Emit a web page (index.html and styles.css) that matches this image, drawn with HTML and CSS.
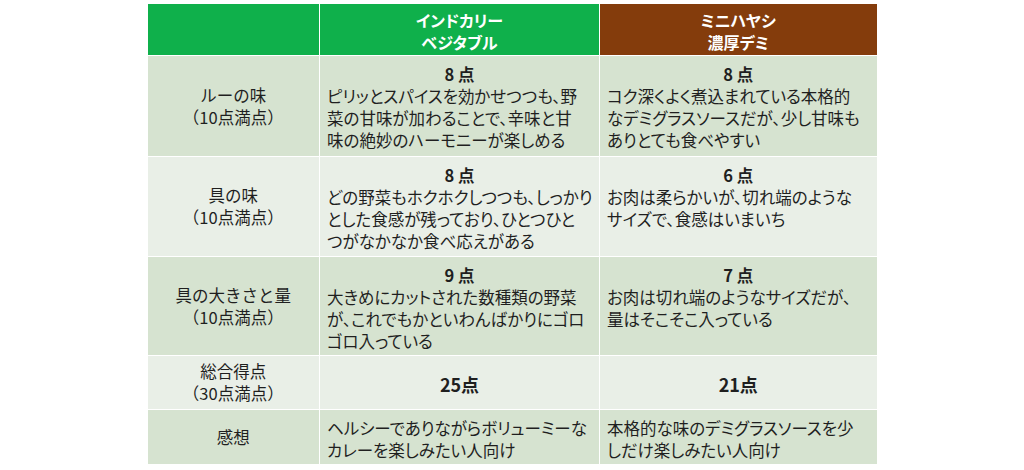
FILE: index.html
```html
<!DOCTYPE html>
<html lang="ja">
<head>
<meta charset="utf-8">
<link rel="stylesheet" href="styles.css">
</head>
<body>
<table class="cmp">
  <colgroup>
    <col class="c1"><col class="c2"><col class="c3">
  </colgroup>
  <thead>
    <tr class="head">
      <th class="h-green"></th>
      <th class="h-green">インドカリー<br>ベジタブル</th>
      <th class="h-brown">ミニハヤシ<br>濃厚デミ</th>
    </tr>
  </thead>
  <tbody>
    <tr class="dark r1">
      <td class="label">ルーの味<br>（10点満点）</td>
      <td class="desc"><div class="score">8 点</div>ピリッとスパイスを効かせつつも、野<br>菜の甘味が加わることで、辛味と甘<br>味の絶妙のハーモニーが楽しめる</td>
      <td class="desc"><div class="score">8 点</div>コク深くよく煮込まれている本格的<br>なデミグラスソースだが、少し甘味も<br>ありとても食べやすい</td>
    </tr>
    <tr class="light r2">
      <td class="label">具の味<br>（10点満点）</td>
      <td class="desc"><div class="score">8 点</div>どの野菜もホクホクしつつも、しっかり<br>とした食感が残っており、ひとつひと<br>つがなかなか食べ応えがある</td>
      <td class="desc"><div class="score">6 点</div>お肉は柔らかいが、切れ端のような<br>サイズで、食感はいまいち</td>
    </tr>
    <tr class="dark r3">
      <td class="label">具の大きさと量<br>（10点満点）</td>
      <td class="desc"><div class="score">9 点</div>大きめにカットされた数種類の野菜<br>が、これでもかといわんばかりにゴロ<br>ゴロ入っている</td>
      <td class="desc"><div class="score">7 点</div>お肉は切れ端のようなサイズだが、<br>量はそこそこ入っている</td>
    </tr>
    <tr class="light r4">
      <td class="label">総合得点<br>（30点満点）</td>
      <td class="total">25点</td>
      <td class="total">21点</td>
    </tr>
    <tr class="dark r5">
      <td class="label">感想</td>
      <td class="desc">ヘルシーでありながらボリューミーな<br>カレーを楽しみたい人向け</td>
      <td class="desc">本格的な味のデミグラスソースを少<br>しだけ楽しみたい人向け</td>
    </tr>
  </tbody>
</table>
</body>
</html>
```
FILE: styles.css
```css
html, body {
  margin: 0;
  padding: 0;
  background: #ffffff;
}
body {
  padding-top: 4px;
  font-family: "Noto Sans CJK JP", "Noto Sans", sans-serif;
  font-feature-settings: "palt";
  color: #1f1f1f;
}
.cmp {
  width: 729px;
  margin: 0 auto;
  border-collapse: collapse;
  table-layout: fixed;
  font-size: 16.5px;
  line-height: 22px;
}
.c1 { width: 172px; }
.c2 { width: 280px; }
.c3 { width: 277px; }
.cmp th, .cmp td {
  border: 1px solid #ffffff;
  padding: 0;
  white-space: nowrap;
  overflow: hidden;
}
.cmp tr > :first-child { border-left: none; }
.cmp tr > :last-child { border-right: none; }
.cmp thead th { border-top: none; }
.cmp tbody tr:last-child td { border-bottom: none; }
.head { height: 51px; }
.head th {
  color: #ffffff;
  font-size: 16px;
  font-weight: 700;
  text-align: center;
  vertical-align: middle;
  line-height: 22px;
  padding-top: 3px;
}
.h-green { background: #0fb04b; }
.h-brown { background: #843c0c; }
.h-green + .h-green { border-left: 1px solid #7fd3a0; }
.dark td { background: #d6e3d0; }
.light td { background: #e9efe7; }
.r1 { height: 101px; }
.r2 { height: 100px; }
.r3 { height: 99px; }
.r4 { height: 54px; }
.r5 { height: 55px; }
.label {
  text-align: center;
  vertical-align: middle;
  font-feature-settings: normal;
}
.desc {
  vertical-align: top;
  padding: 7px 0 0 7px !important;
}
.score {
  text-align: center;
  font-weight: 700;
  margin-left: -7px;
}
.total {
  text-align: center;
  vertical-align: middle;
  font-weight: 700;
  font-size: 18px;
  padding-top: 4px !important;
}
```
